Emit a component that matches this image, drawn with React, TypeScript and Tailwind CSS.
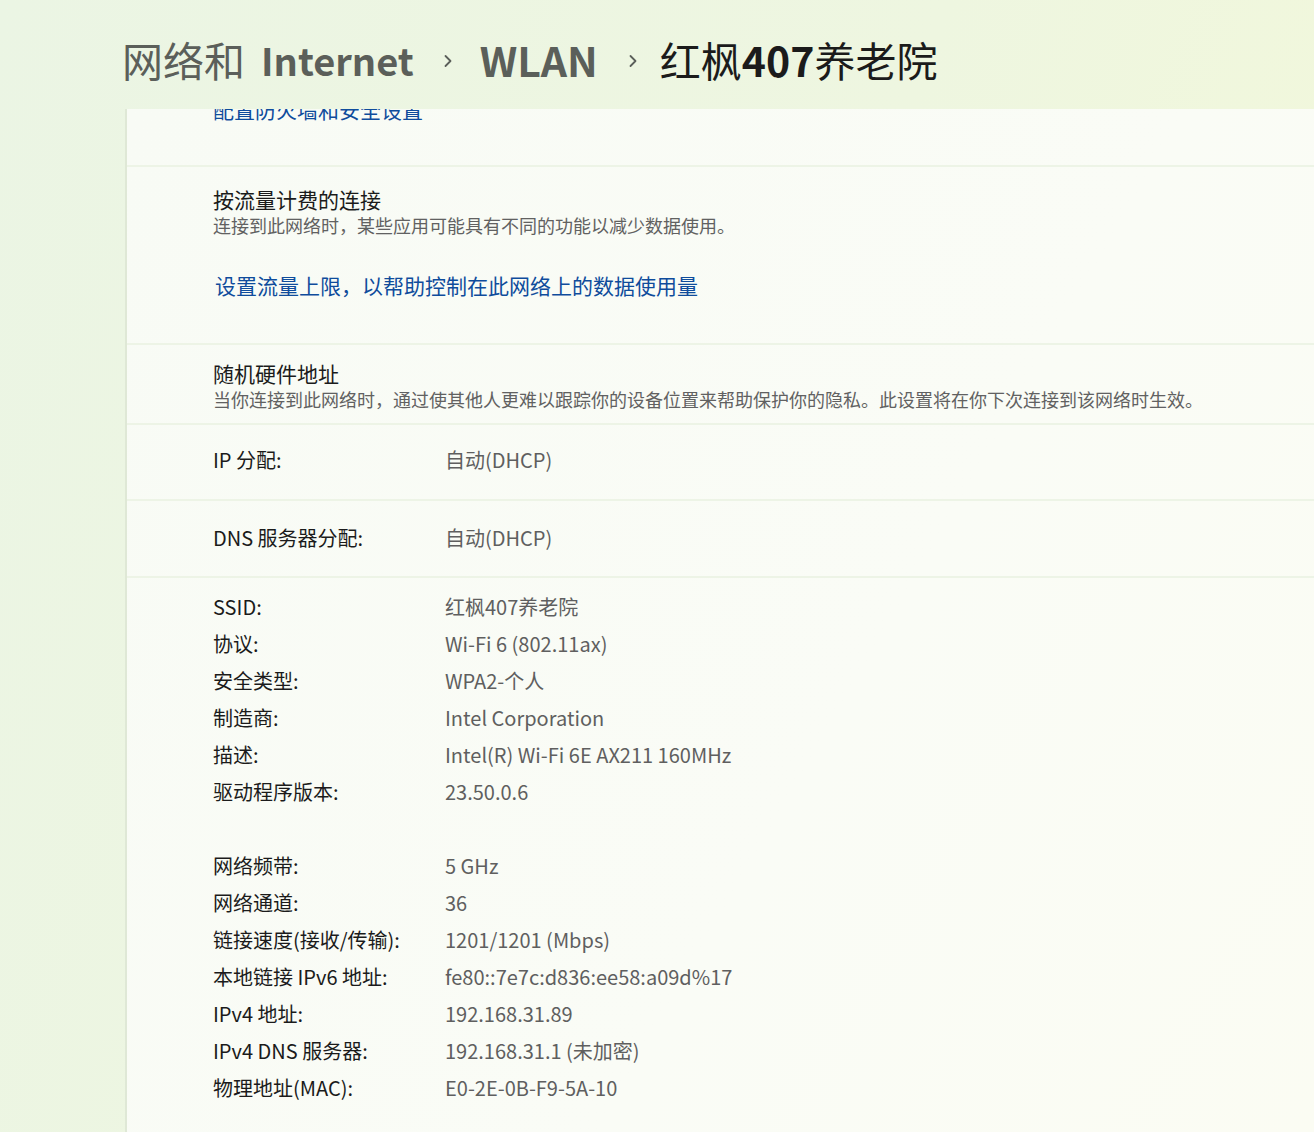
const details1 = [
  { label: 'SSID:', value: '红枫407养老院' },
  { label: '协议:', value: 'Wi-Fi 6 (802.11ax)' },
  { label: '安全类型:', value: 'WPA2-个人' },
  { label: '制造商:', value: 'Intel Corporation' },
  { label: '描述:', value: 'Intel(R) Wi-Fi 6E AX211 160MHz' },
  { label: '驱动程序版本:', value: '23.50.0.6' },
];

const details2 = [
  { label: '网络频带:', value: '5 GHz' },
  { label: '网络通道:', value: '36' },
  { label: '链接速度(接收/传输):', value: '1201/1201 (Mbps)' },
  { label: '本地链接 IPv6 地址:', value: 'fe80::7e7c:d836:ee58:a09d%17' },
  { label: 'IPv4 地址:', value: '192.168.31.89' },
  { label: 'IPv4 DNS 服务器:', value: '192.168.31.1 (未加密)' },
  { label: '物理地址(MAC):', value: 'E0-2E-0B-F9-5A-10' },
];

function Chevron({ className }: { className: string }) {
  return (
    <svg width="12" height="18" viewBox="0 0 12 18" className={`mt-[2px] shrink-0 ${className}`}>
      <path d="M3.5 4 L8.5 9 L3.5 14" fill="none" stroke="#5b5f5a" strokeWidth="1.8" strokeLinecap="round" strokeLinejoin="round" />
    </svg>
  );
}

function DetailRow({ label, value }: { label: string; value: string }) {
  return (
    <div className="flex h-[37px] items-center">
      <div className="w-[232px] shrink-0 text-[#1b1b1b]">{label}</div>
      <div className="text-[#5f5f5f]">{value}</div>
    </div>
  );
}

export default function App() {
  return (
    <div
      className="flex h-[1132px] w-full flex-col overflow-hidden bg-[linear-gradient(110deg,#ebf5e4_0%,#eef6e0_55%,#f3f8d9_100%)] text-[20px] leading-[28px]"
      style={{ fontFamily: '"Noto Sans CJK SC", "Noto Sans", sans-serif' }}
    >
      <header className="flex h-[109px] shrink-0 items-center pl-[122px] pt-[10px] text-[41px] leading-none">
        <span className="text-[#5b5f5a]">网络和</span>
        <span className="ml-[16px] text-[38px] font-semibold text-[#5b5f5a]">Internet</span>
        <Chevron className="ml-[28px] mr-[26px]" />
        <span className="font-semibold text-[#5b5f5a]">WLAN</span>
        <Chevron className="ml-[29px] mr-[21px]" />
        <span className="text-[#1b1b1b]">红枫<span className="font-semibold">407</span>养老院</span>
      </header>

      <main className="ml-[125px] flex flex-1 flex-col overflow-hidden border-l-2 border-[#dfe8d6] bg-[linear-gradient(120deg,#f8fbf5_0%,#fafcf6_60%,#fbfcf3_100%)]">
        <section className="flex h-[56px] shrink-0 flex-col overflow-hidden pl-[86px]">
          <div className="-mt-[14px] text-[21px] text-[#0f4c9c]">配置防火墙和安全设置</div>
        </section>

        <section className="h-[178px] shrink-0 border-t-2 border-[#edf4e6] pl-[86px] pt-[18px]">
          <div className="text-[21px] text-[#1b1b1b]">按流量计费的连接</div>
          <div className="text-[18px] leading-[24px] text-[#616161]">
            连接到此网络时，某些应用可能具有不同的功能以减少数据使用。
          </div>
          <div className="mt-[34px] pl-[2px] text-[21px] text-[#0f4c9c]">
            设置流量上限，以帮助控制在此网络上的数据使用量
          </div>
        </section>

        <section className="h-[80px] shrink-0 border-t-2 border-[#edf4e6] pl-[86px] pt-[14px]">
          <div className="text-[21px] text-[#1b1b1b]">随机硬件地址</div>
          <div className="text-[18px] leading-[24px] text-[#616161]">
            当你连接到此网络时，通过使其他人更难以跟踪你的设备位置来帮助保护你的隐私。此设置将在你下次连接到该网络时生效。
          </div>
        </section>

        <section className="flex h-[76px] shrink-0 items-center border-t-2 border-[#edf4e6] pb-[4px] pl-[86px]">
          <div className="w-[232px] shrink-0 text-[#1b1b1b]">IP 分配:</div>
          <div className="text-[#5f5f5f]">自动(DHCP)</div>
        </section>

        <section className="flex h-[77px] shrink-0 items-center border-t-2 border-[#edf4e6] pb-[2px] pl-[86px]">
          <div className="w-[232px] shrink-0 text-[#1b1b1b]">DNS 服务器分配:</div>
          <div className="text-[#5f5f5f]">自动(DHCP)</div>
        </section>

        <section className="border-t-2 border-[#edf4e6] pl-[86px] pt-[10px]">
          {details1.map((d) => (
            <DetailRow key={d.label} label={d.label} value={d.value} />
          ))}
          <div className="h-[37px]" />
          {details2.map((d) => (
            <DetailRow key={d.label} label={d.label} value={d.value} />
          ))}
        </section>
      </main>
    </div>
  );
}
